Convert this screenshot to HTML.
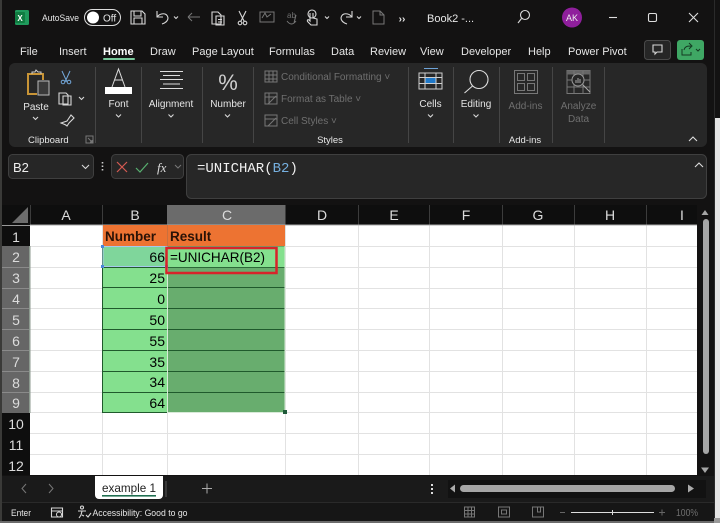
<!DOCTYPE html>
<html><head><meta charset="utf-8"><style>
html,body{margin:0;padding:0;width:720px;height:523px;overflow:hidden;background:#111}
svg{display:block}
text{font-family:"Liberation Sans",sans-serif;fill:#e6e6e6;font-size:11px}
.m{text-anchor:middle}.d{fill:#6f6f6f}.e{fill:#000;font-size:14px}
.l{font-size:10px}
.h{font-size:14px;fill:#dcdcdc;text-anchor:middle}
.i{fill:none;stroke:#d8d8d8;stroke-width:1.1}
.g{fill:none;stroke:#777;stroke-width:1}
.c{fill:none;stroke:#ddd;stroke-width:1.1}
</style></head><body>
<svg width="720" height="523" viewBox="0 0 720 523" xmlns="http://www.w3.org/2000/svg">
<rect width="720" height="523" fill="#131212"/>
<rect x="0" y="0" width="2" height="523" fill="#3a3a38"/>
<rect x="715" y="118" width="5" height="405" fill="#e4e4e4"/>
<rect x="714" y="0" width="1" height="523" fill="#2a2a2a"/>
<rect x="0" y="521" width="720" height="2" fill="#6b6b6b"/>

<!-- title bar -->
<rect x="15" y="10" width="14" height="15" rx="1.5" fill="#1f9a5c"/><rect x="15" y="12" width="10" height="11" rx="1" fill="#107c41"/>
<text x="20" y="21" class="m" style="font-size:8px;font-weight:700;fill:#fff">X</text>
<text x="42" y="21" textLength="37" lengthAdjust="spacingAndGlyphs" style="font-size:9.500px">AutoSave</text>
<rect x="84.500" y="9.500" width="36" height="16" rx="8" fill="none" stroke="#ddd"/>
<circle cx="93" cy="17.500" r="6" fill="#fff"/>
<text x="103" y="21.500" style="font-size:10px">Off</text>
<path class="i" d="M131 11h11l3 3v10h-14zM134 11v5h7v-5M134 24v-6h8v6"/>
<path class="i" d="M157 11v6h6M157 17c3-4 10-5 11 1 0 3-3 5-6 6"/>
<path class="i" d="M174 16.500l2 2 2-2"/>
<path class="g" d="M188 17h12M188 17l4-4M188 17l4 4"/>
<path class="i" d="M212 12h6l3 3v9h-9zM216 16h8v9h-8zM218 19.500h4M218 22h4"/>
<path class="i" d="M239 11l5 10M246 11l-5 10"/><circle class="i" cx="240" cy="23" r="1.800"/><circle class="i" cx="245" cy="23" r="1.800"/>
<path class="g" d="M260 12h14v10h-14zM262 18l3-5 2 4 4-3"/>
<text x="287" y="18" class="d" style="font-size:8px">ab</text><path class="g" d="M287 21c3 4 6 4 9 0M296 15l-2 8"/>
<circle class="i" cx="312" cy="14" r="4"/><path class="i" d="M310 13v8l-1-1c-2-1-2 1-1 2l3 3h6v-6l-4-1v-5"/>
<path class="i" d="M325 16.500l2 2 2-2"/>
<path class="i" d="M352 11v6h-6M352 17c-3-4-10-5-11 1 0 3 3 5 6 6"/>
<path class="i" d="M357 16.500l2 2 2-2"/>
<path class="g" d="M373 11h7l4 4v9h-11zM380 11v4h4"/>
<text x="402" y="22" class="m" style="font-weight:700;font-size:10px">››</text>
<text x="427" y="22" style="font-size:11px">Book2  -...</text>
<circle cx="525" cy="15" r="4.500" class="i"/><path class="i" d="M521.500 18.500l-3.500 4.500"/>
<circle cx="572" cy="17.500" r="10" fill="#8f1f9c"/><text x="572" y="21" class="m" style="font-size:9px;fill:#eee">AK</text>
<path class="c" d="M609 17.500h8"/><rect x="648.500" y="13.500" width="8" height="8" rx="1.500" class="c"/><path class="c" d="M689 13l9 9M698 13l-9 9"/>

<!-- tabs -->
<text x="20" y="55">File</text><text x="59" y="55">Insert</text>
<text x="103" y="55" style="font-weight:700;fill:#fff">Home</text><rect x="103" y="58" width="32" height="2" rx="1" fill="#78c89b"/>
<text x="150" y="55">Draw</text><text x="192" y="55">Page Layout</text><text x="269" y="55">Formulas</text>
<text x="331" y="55">Data</text><text x="370" y="55">Review</text><text x="420" y="55">View</text>
<text x="461" y="55">Developer</text><text x="528" y="55">Help</text><text x="568" y="55">Power Pivot</text>
<rect x="644.500" y="40.500" width="26" height="19" rx="3" fill="#262626" stroke="#4a4a4a"/>
<path class="i" d="M653 45h9v7h-5l-2 2v-2h-2z"/>
<rect x="677" y="40" width="27" height="20" rx="3" fill="#3fa764"/>
<path fill="none" stroke="#143a22" d="M682 49v6h9v-3M684 50c1-4 4-4 7-4M689 43l3 3-3 3M696 49l2 2 2-2"/>

<!-- ribbon -->
<rect x="9" y="63" width="698" height="84" rx="6" fill="#272727"/>
<g stroke="#454545"><path d="M95.500 67v76M141.500 67v76M202.500 67v76M253.500 67v76M408.500 67v76M453.500 67v76M499.500 67v76M552.500 67v76M604.500 67v76"/></g>
<!-- paste -->
<path fill="none" stroke="#c89436" stroke-width="2" d="M37 94h-9V74h15v6"/><path fill="none" stroke="#ccc" d="M32 74v-2h3l1-2 2 2h3v2"/>
<rect x="38" y="81" width="11" height="14" fill="#3a3a3a" stroke="#bbb"/>
<text x="36" y="110" class="m l">Paste</text><path class="i" d="M33 117l2.500 2.500 2.500-2.500"/>
<path fill="none" stroke="#74a8da" d="M62 71l5 11M70 71l-5 11"/><circle cx="63" cy="82" r="1.800" fill="none" stroke="#74a8da"/><circle cx="69" cy="82" r="1.800" fill="none" stroke="#74a8da"/>
<path class="i" d="M59 93h7l2 2v9h-9zM63 96h8v9h-8z"/><path class="i" d="M79 97l2.500 2.500 2.500-2.500"/>
<path class="i" d="M61 123l6-2 4-6 3 3-5 5-2 3c-2-2-4-2-6-3z"/>
<text x="28" y="143" style="font-size:9.500px">Clipboard</text>
<path class="g" d="M86 136h7v7h-7zM88 138l4 4M92 140v2h-2"/>
<!-- font -->
<path fill="none" stroke="#ddd" stroke-width="1" d="M112 87l6.500-18 6.500 18M114.500 80h8"/><rect x="105" y="87" width="27" height="7" fill="#fff"/>
<text x="118.500" y="107" class="m l">Font</text><path class="i" d="M116 114.500l2.500 2.500 2.500-2.500"/>
<!-- alignment -->
<path class="c" d="M160 71.500h23M163 75.500h17M160 79.500h23M163 84h17M160 88.500h23"/>
<text x="171" y="107" class="m l">Alignment</text><path class="i" d="M168.500 114.500l2.500 2.500 2.500-2.500"/>
<!-- number -->
<text x="228" y="90" class="m" style="font-family:'DejaVu Sans ExtraLight','Liberation Sans',sans-serif;font-size:22px;fill:#cfcfcf">%</text>
<text x="228" y="107" class="m l">Number</text><path class="i" d="M225 114.500l2.500 2.500 2.500-2.500"/>
<!-- styles -->
<path class="g" d="M265 71h12v11h-12zM265 75h12M265 79h12M269 71v11M273 71v11"/><text x="281" y="80" class="d" style="font-size:10px">Conditional Formatting ˅</text>
<path class="g" d="M265 93h12v11h-12zM265 97h12M269 93v11M268 104l8-8"/><text x="281" y="102" class="d" style="font-size:10px">Format as Table ˅</text>
<path class="g" d="M265 115h12v11h-12zM265 119h12M268 126l8-8"/><text x="281" y="124" class="d" style="font-size:10px">Cell Styles ˅</text>
<text x="330" y="143" class="m" style="font-size:9.500px">Styles</text>
<!-- cells -->
<rect x="419" y="73" width="23" height="16" fill="none" stroke="#cfcfcf"/><rect x="425" y="77.500" width="11" height="6" fill="#1f78c8"/>
<path stroke="#cfcfcf" fill="none" d="M419 77.500h23M419 83.500h23M425 73v16M436 73v16"/><path stroke="#6fa4d8" d="M424 68.500h14"/>
<text x="430.500" y="107" class="m l">Cells</text><path class="i" d="M428 114.500l2.500 2.500 2.500-2.500"/>
<!-- editing -->
<circle cx="479" cy="79.500" r="9" class="c"/><path class="c" d="M472.500 86l-8 7"/>
<text x="476" y="107" class="m l">Editing</text><path class="i" d="M473.500 114.500l2.500 2.500 2.500-2.500"/>
<!-- add-ins -->
<rect x="514.500" y="70.500" width="23" height="23" class="g"/><rect x="517.500" y="73.500" width="7" height="7" class="g"/><rect x="527.500" y="73.500" width="7" height="7" class="g"/><rect x="517.500" y="83.500" width="7" height="7" class="g"/><rect x="527.500" y="83.500" width="7" height="7" class="g"/>
<text x="525.500" y="109" class="m d" style="font-size:10px">Add-ins</text>
<text x="525" y="143" class="m" style="font-size:9.500px">Add-ins</text>
<!-- analyze -->
<rect x="567" y="70.500" width="23" height="23" class="g"/><rect x="567" y="70.500" width="23" height="4" fill="#666"/>
<path class="g" d="M567 80h23M567 87h23M574 71v23M583 71v23"/><circle cx="578" cy="80" r="6" fill="#272727" stroke="#999"/><path stroke="#aaa" d="M576 83v-3M578 83v-5M580 83v-4M583 85l7 7"/>
<text x="578.500" y="109" class="m d" style="font-size:10px">Analyze</text><text x="578.500" y="122" class="m d" style="font-size:10px">Data</text>
<path class="c" d="M689 141l4-4 4 4"/>

<!-- formula bar -->
<rect x="8.500" y="154.500" width="85" height="24" rx="4" fill="#262626" stroke="#3f3f3f"/>
<text x="13" y="172" style="font-size:13px;fill:#eee">B2</text><path class="i" d="M82 165l3.500 3.500 3.500-3.500"/>
<path stroke="#ccc" stroke-width="1.600" stroke-dasharray="1.500 2" d="M102.500 162v10"/>
<rect x="111.500" y="154.500" width="72" height="24" rx="4" fill="#262626" stroke="#3f3f3f"/>
<path fill="none" stroke="#d65a52" stroke-width="1.200" d="M117 162l10 10M127 162l-10 10"/>
<path fill="none" stroke="#58b070" stroke-width="1.200" d="M136 168l4 4 8-9"/>
<text x="157" y="172" style="font-family:'Liberation Serif',serif;font-style:italic;font-size:13px;fill:#ddd">fx</text><path class="g" d="M175 165l3 3 3-3"/>
<rect x="186.500" y="154.500" width="520" height="44" rx="5" fill="#272727" stroke="#3f3f3f"/>
<text x="197" y="172" style="font-family:'Liberation Mono',monospace;font-size:14px;fill:#f0f0f0">=UNICHAR(<tspan fill="#76b0e0">B2</tspan>)</text>
<path class="c" d="M695 167l4-4 4 4"/>

<!-- grid -->
<rect x="2" y="205" width="695" height="20" fill="#0e0e0e"/>
<rect x="2" y="225" width="28" height="250" fill="#0e0e0e"/>
<rect x="30" y="225" width="667" height="250" fill="#fff"/>
<g stroke="#e2e2e2"><path d="M30 246.500h667M30 267.500h667M30 288.500h667M30 308.500h667M30 329.500h667M30 350.500h667M30 371.500h667M30 392.500h667M30 412.500h667M30 433.500h667M30 454.500h667"/><path d="M102.500 225v250M167.500 225v250M285.500 225v250M358.500 225v250M429.500 225v250M502.500 225v250M574.500 225v250M646.500 225v250"/></g>
<path fill="#6d6d6d" d="M12 223l16-16v16z"/>
<g stroke="#3c3c3c"><path d="M30.500 205v20M102.500 205v20M285.500 205v20M358.500 205v20M429.500 205v20M502.500 205v20M574.500 205v20M646.500 205v20"/></g>
<rect x="167" y="205" width="118" height="20" fill="#6b6b6b"/>
<rect x="2" y="246" width="28" height="167" fill="#666"/>
<rect x="2" y="225" width="28" height="1" fill="#999"/>
<g stroke="#8a8a8a" ><path d="M2 267.500h28M2 288.500h28M2 308.500h28M2 329.500h28M2 350.500h28M2 371.500h28M2 392.500h28"/></g>
<rect x="29" y="246" width="1.500" height="167" fill="#8c9a8f"/>
<rect x="30" y="224.500" width="667" height="1" fill="#aaa"/>
<g class="h"><text class="h" x="66" y="220">A</text><text class="h" x="135" y="220">B</text><text class="h" x="227" y="220">C</text><text class="h" x="322" y="220">D</text><text class="h" x="394" y="220">E</text><text class="h" x="466" y="220">F</text><text class="h" x="538" y="220">G</text><text class="h" x="610" y="220">H</text><text class="h" x="682" y="220">I</text></g>
<text class="h" x="16" y="242">1</text><text class="h" x="16" y="262">2</text><text class="h" x="16" y="283">3</text><text class="h" x="16" y="304">4</text><text class="h" x="16" y="325">5</text><text class="h" x="16" y="346">6</text><text class="h" x="16" y="367">7</text><text class="h" x="16" y="388">8</text><text class="h" x="16" y="408">9</text><text class="h" x="16" y="429">10</text><text class="h" x="16" y="450">11</text><text class="h" x="16" y="471">12</text>

<rect x="103" y="225" width="182" height="21" fill="#ed7332"/>
<path stroke="#c9703e" d="M167.500 225v21"/>
<text x="105" y="241" style="font-size:13.500px;font-weight:700;fill:#2a1206">Number</text>
<text x="170" y="241" style="font-size:13.500px;font-weight:700;fill:#2a1206">Result</text>
<rect x="103" y="246" width="64" height="167" fill="#84e08e"/>
<rect x="167" y="246" width="118" height="167" fill="#68ad6e"/>
<rect x="167" y="247" width="118" height="20" fill="#84e08e"/>
<g stroke="#1f5a2c"><path d="M103 287.500h64M103 308.500h64M103 329.500h64M103 350.500h64M103 371.500h64M103 392.500h64M103 412.500h64M102.500 246v167M167 287.500h118M167 308.500h118M167 329.500h118M167 350.500h118M167 371.500h118M167 392.500h118M103 267.500h64"/><path stroke="#2c6a38" d="M167 267.500h118"/></g>
<rect x="103" y="246.500" width="64" height="20" fill="#7fd69b" stroke="#a6c8ec"/>
<path stroke="#d8ead8" d="M167.500 267v146M167 412.500h118M285 246v167"/>
<rect x="101" y="245" width="3" height="3" fill="#4a86d8"/><rect x="101" y="265" width="3" height="3" fill="#4a86d8"/><rect x="165" y="265" width="3" height="3" fill="#4a86d8"/>
<rect x="283" y="410" width="4" height="4" fill="#1f5a3a"/>
<g text-anchor="end"><text class="e" x="165" y="262">66</text><text class="e" x="165" y="283">25</text><text class="e" x="165" y="304">0</text><text class="e" x="165" y="325">50</text><text class="e" x="165" y="346">55</text><text class="e" x="165" y="367">35</text><text class="e" x="165" y="387">34</text><text class="e" x="165" y="408">64</text></g>
<text class="e" x="170" y="262" textLength="95" lengthAdjust="spacingAndGlyphs" style="font-size:14px">=UNICHAR(B2)</text>
<rect x="166.500" y="248" width="110" height="25" fill="none" stroke="#d8232a" stroke-width="2.500"/>

<!-- scrollbars -->
<path fill="#a6a6a6" d="M701.500 215l3.500-5 3.500 5z"/>
<rect x="703" y="219" width="6" height="235" rx="3" fill="#a6a6a6"/>
<path fill="#a6a6a6" d="M701 467.500h8l-4 5.500z"/>

<!-- sheet tabs -->
<rect x="2" y="476" width="712" height="26" fill="#1a1a1a"/>
<path class="g" d="M26 484l-4 4.500 4 4.500M49 484l4 4.500-4 4.500"/>
<path d="M95 476h68v19a4 4 0 0 1-4 4H99a4 4 0 0 1-4-4z" fill="#fff"/>
<text x="102" y="492" textLength="54" lengthAdjust="spacingAndGlyphs" style="font-size:12px;fill:#222">example 1</text>
<rect x="102" y="495" width="54" height="1.600" fill="#1f6f50"/>
<path stroke="#555" d="M166 481v16"/>
<path stroke="#aaa" d="M202 488.500h10M207 483.500v10"/>
<rect x="431" y="484" width="2" height="2" fill="#ddd"/><rect x="431" y="488" width="2" height="2" fill="#ddd"/><rect x="431" y="492" width="2" height="2" fill="#ddd"/>
<rect x="448" y="480" width="258" height="18" fill="#121212"/>
<path fill="#aaa" d="M450 488.500l5-4v8z"/>
<rect x="460" y="485" width="215" height="7" rx="3.500" fill="#a6a6a6"/>
<path fill="#aaa" d="M688 484.500l6 4-6 4z"/>

<!-- status bar -->
<rect x="2" y="502" width="712" height="19" fill="#161616"/>
<path stroke="#2a2a2a" d="M2 502.500h712"/>
<text x="11" y="516" textLength="20" lengthAdjust="spacingAndGlyphs" style="font-size:9.500px">Enter</text>
<path class="i" d="M51.500 508h11v9h-11zM51.500 511h11"/><circle cx="59" cy="514.500" r="2.500" fill="#161616" stroke="#ddd"/>
<circle cx="82" cy="507.500" r="1.500" class="i"/><path class="i" d="M78 511h8M82 511l-1 4-2 3M82 515l2 1M86 515l2 2 3-4"/>
<text x="92.500" y="516" textLength="95" lengthAdjust="spacingAndGlyphs" style="font-size:9.500px">Accessibility: Good to go</text>
<path class="g" d="M464.500 507h10v10h-10zM464.500 510.500h10M464.500 514h10M468 507v10M471.500 507v10"/>
<path class="g" d="M498.500 507h11v10h-11zM501.500 510h5v4h-5z"/>
<path class="g" d="M532.500 507h11v10h-11zM537.500 507v5h3v-5"/>
<path stroke="#666" d="M560 512.500h5"/><path stroke="#ddd" d="M571 512.500h83"/><path stroke="#ddd" d="M612.500 510v5"/>
<path stroke="#666" d="M659 512.500h6M662 509.500v6"/>
<text x="676" y="516" textLength="22" lengthAdjust="spacingAndGlyphs" class="d" style="font-size:10px">100%</text>
<path fill="#999" d="M714 518h6v5h-6z"/>
</svg>
</body></html>
